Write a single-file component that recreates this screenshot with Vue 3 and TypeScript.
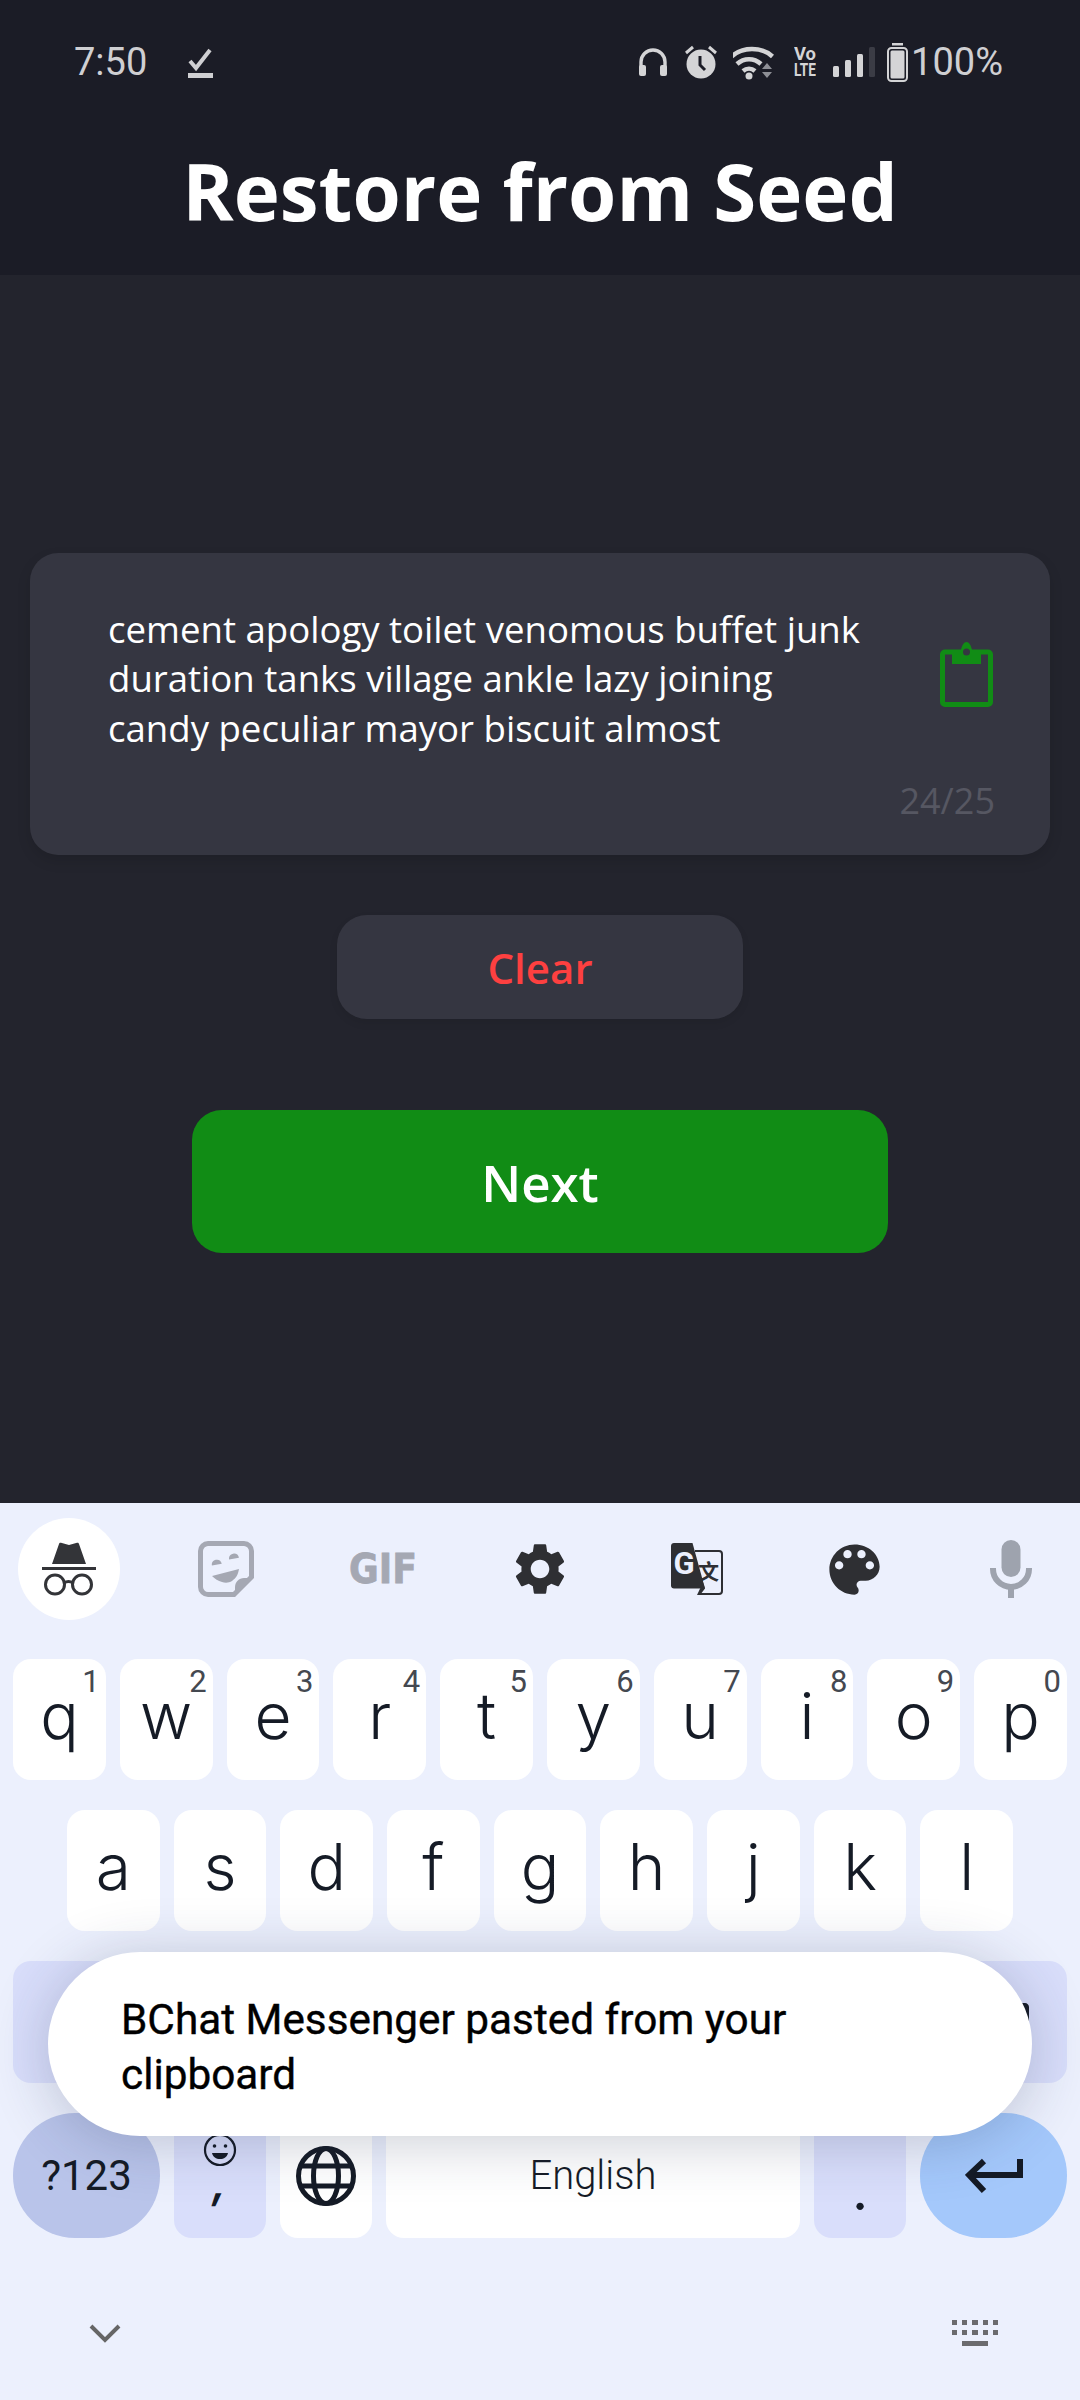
<script setup lang="ts">
interface Key {
  label: string
  hint?: string
}

const seedText =
  'cement apology toilet venomous buffet junk duration tanks village ankle lazy joining candy peculiar mayor biscuit almost'

const hints = ['1', '2', '3', '4', '5', '6', '7', '8', '9', '0']
const topRow: Key[] = 'qwertyuiop'.split('').map((label, i) => ({ label, hint: hints[i] }))
const midRow: Key[] = 'asdfghjkl'.split('').map((label) => ({ label }))
const lowRow: Key[] = 'zxcvbnm'.split('').map((label) => ({ label }))
</script>

<template>
  <div class="screen">
    <header class="top">
      <div class="status">
        <div class="status-left">
          <span class="time">7:50</span>
          <svg class="check" width="26" height="30" viewBox="0 0 26 30">
            <path d="M3 13l6 7L23 2" fill="none" stroke="#cfcfd2" stroke-width="4" />
            <rect x="1" y="25" width="25" height="5" fill="#cfcfd2" />
          </svg>
        </div>
        <div class="status-right">
          <svg class="s-head" width="30" height="30" viewBox="0 0 30 30">
            <path d="M3 24V15a12 12 0 0 1 24 0v9" fill="none" stroke="#d4d4d6" stroke-width="3.4" />
            <rect x="1" y="18" width="7" height="11" rx="2" fill="#d4d4d6" />
            <rect x="22" y="18" width="7" height="11" rx="2" fill="#d4d4d6" />
          </svg>
          <svg class="s-alarm" width="32" height="34" viewBox="0 0 32 34">
            <circle cx="16" cy="19" r="14.500" fill="#d4d4d6" />
            <path d="M15 11v9l5 5" fill="none" stroke="#1b1c26" stroke-width="3" />
            <path d="M1 8l7-6M31 8l-7-6" stroke="#d4d4d6" stroke-width="3" />
          </svg>
          <svg class="s-wifi" width="44" height="35" viewBox="0 0 44 35">
            <path d="M1.500 11.500c11-10 30-10 41 0" transform="translate(-3 0)" fill="none" stroke="#d4d4d6" stroke-width="4.500" />
            <path d="M7 19c7-6.500 17-6.500 24 0" transform="translate(-3 0)" fill="none" stroke="#d4d4d6" stroke-width="4.500" />
            <path d="M13 26c3.500-3 8.500-3 12 0" transform="translate(-3 0)" fill="none" stroke="#d4d4d6" stroke-width="4.500" />
            <circle cx="16" cy="31" r="3.500" fill="#d4d4d6" />
            <path d="M29 24l5-6 5 6zM29 27h10l-5 6z" fill="#8e8f96" />
          </svg>
          <svg class="s-volte" width="22" height="32" viewBox="0 0 22 32">
            <text x="0" y="14" textLength="22" lengthAdjust="spacingAndGlyphs" class="volte-text">Vo</text>
            <text x="0" y="30" textLength="22" lengthAdjust="spacingAndGlyphs" class="volte-text">LTE</text>
          </svg>
          <svg class="s-signal" width="43" height="30" viewBox="0 0 43 30">
            <rect x="0" y="19" width="6" height="11" rx="1.500" fill="#d4d4d6" />
            <rect x="12" y="13" width="6" height="17" rx="1.500" fill="#d4d4d6" />
            <rect x="24" y="7" width="6" height="23" rx="1.500" fill="#d4d4d6" />
            <rect x="36" y="0" width="6" height="30" rx="1.500" fill="#3b3c45" />
          </svg>
          <svg class="s-batt" width="21" height="39" viewBox="0 0 21 39">
            <rect x="5" y="0" width="11" height="2.500" fill="#d4d4d6" />
            <rect x="1" y="5" width="19" height="33" rx="3.500" fill="none" stroke="#d4d4d6" stroke-width="2" />
            <rect x="3.500" y="7.500" width="14" height="28" rx="1.500" fill="#d4d4d6" />
          </svg>
          <span class="pct">100%</span>
        </div>
      </div>
      <h1 class="title">Restore from Seed</h1>
    </header>

    <main class="body">
      <section class="seed-card">
        <div class="seed-row">
          <p class="seed-text">{{ seedText }}</p>
          <svg class="paste" width="53" height="65" viewBox="0 0 53 65">
            <rect x="2.500" y="10" width="48" height="52.500" rx="2.500" fill="none" stroke="#118c15" stroke-width="5" />
            <path d="M12 8h9c1-5 3-8 5.500-8s4.500 3 5.500 8h9v14H12z" fill="#118c15" />
            <circle cx="26.500" cy="10" r="3.500" fill="#353641" />
          </svg>
        </div>
        <div class="counter">24/25</div>
      </section>
      <button class="clear-btn">Clear</button>
      <button class="next-btn">Next</button>
    </main>

    <section class="keyboard">
      <div class="kb-tools">
        <div class="tool tool-active">
          <svg width="56" height="54" viewBox="0 0 56 54">
            <path d="M11 22l7-20c.3-1 1-1.500 2-1.200L28 3l8-2.200c1-.3 1.700.2 2 1.200l7 20z" fill="#333438" />
            <rect x="1" y="25" width="54" height="3" fill="#333438" />
            <circle cx="14" cy="42.500" r="9.500" fill="none" stroke="#333438" stroke-width="3" />
            <circle cx="41" cy="42.500" r="9.500" fill="none" stroke="#333438" stroke-width="3" />
            <path d="M23 41c3-2 6-2 9 0" fill="none" stroke="#333438" stroke-width="3" />
          </svg>
        </div>
        <div class="tool">
          <svg width="56" height="56" viewBox="0 0 56 56">
            <path d="M10 2.500h36c4 0 7.500 3.500 7.500 7.500v26L36 53.500H10c-4 0-7.500-3.500-7.500-7.500V10c0-4 3.500-7.500 7.500-7.500z" fill="none" stroke="#a5a8b3" stroke-width="5" />
            <path d="M55 37L37 55V46c0-5 4-9 9-9z" fill="#a5a8b3" />
            <path d="M13 22c0-3 2-5 5-5s5 2 5 5zM31 19c0-3 2-5 5-5s5 2 5 5z" fill="#a5a8b3" transform="rotate(-10 28 18)" />
            <path d="M14 35l27-7c-1 6-3 9-7 12-3 2-7 2-10 1-4-1-7-3-10-6z" fill="#a5a8b3" />
          </svg>
        </div>
        <div class="tool">
          <svg width="70" height="40" viewBox="0 0 70 40">
            <text x="1" y="34" textLength="68" lengthAdjust="spacingAndGlyphs" class="gif-text">GIF</text>
          </svg>
        </div>
        <div class="tool">
          <svg width="62" height="62" viewBox="0 0 24 24">
            <path fill="#2e2f33" d="M19.140 12.940c.04-.3.06-.61.06-.94 0-.32-.02-.64-.07-.94l2.030-1.580c.18-.14.23-.41.12-.61l-1.920-3.320c-.12-.22-.37-.29-.59-.22l-2.390.96c-.5-.38-1.030-.7-1.620-.94l-.36-2.540c-.04-.24-.24-.41-.48-.41h-3.840c-.24 0-.43.17-.47.41l-.36 2.540c-.59.24-1.130.57-1.620.94l-2.390-.96c-.22-.08-.47 0-.59.22L2.740 8.870c-.12.21-.08.47.12.61l2.030 1.580c-.05.3-.09.63-.09.94s.02.64.07.94l-2.030 1.580c-.18.14-.23.41-.12.61l1.920 3.320c.12.22.37.29.59.22l2.390-.96c.5.38 1.030.7 1.620.94l.36 2.540c.05.24.24.41.48.41h3.840c.24 0 .44-.17.47-.41l.36-2.540c.59-.24 1.130-.56 1.620-.94l2.390.96c.22.08.47 0 .59-.22l1.920-3.320c.12-.22.07-.47-.12-.61l-2.010-1.580zM12 15.600c-1.980 0-3.600-1.620-3.600-3.600s1.620-3.600 3.600-3.600 3.600 1.620 3.600 3.600-1.620 3.600-3.600 3.600z" />
          </svg>
        </div>
        <div class="tool">
          <svg width="52" height="52" viewBox="0 0 52 52">
            <path d="M24 8h24c1.700 0 3 1.300 3 3v37c0 1.700-1.300 3-3 3H29" fill="none" stroke="#2e2f33" stroke-width="2" />
            <path d="M3 0h18.500L34 45.500H3c-1.700 0-3-1.300-3-3V3c0-1.700 1.300-3 3-3z" fill="#2e2f33" />
            <path d="M29 52l5-6.500 -2-6 -6 12.500z" fill="#2e2f33" />
            <text x="2.500" y="31" class="tr-g">G</text>
            <text x="27" y="36" class="tr-zh">文</text>
          </svg>
        </div>
        <div class="tool">
          <svg width="67" height="67" viewBox="0 0 24 24">
            <path fill="#2e2f33" d="M12 3c-4.970 0-9 4.030-9 9s4.030 9 9 9c.83 0 1.500-.67 1.500-1.500 0-.39-.15-.74-.39-1.010-.23-.26-.38-.61-.38-.99 0-.83.67-1.500 1.500-1.500H16c2.760 0 5-2.240 5-5 0-4.420-4.030-8-9-8zm-5.500 9c-.83 0-1.500-.67-1.500-1.500S5.670 9 6.500 9 8 9.670 8 10.500 7.330 12 6.500 12zm3-4C8.670 8 8 7.330 8 6.500S8.670 5 9.500 5s1.500.67 1.500 1.500S10.330 8 9.500 8zm5 0c-.83 0-1.500-.67-1.500-1.500S13.670 5 14.500 5s1.500.67 1.500 1.500S15.330 8 14.500 8zm3 4c-.83 0-1.500-.67-1.500-1.500S16.670 9 17.500 9s1.500.67 1.500 1.500-.67 1.500-1.500 1.500z" />
          </svg>
        </div>
        <div class="tool">
          <svg width="42" height="58" viewBox="0 0 42 58">
            <rect x="11.500" y="0" width="19" height="37" rx="9.500" fill="#9ea3ae" />
            <path d="M3 28v1a18 18 0 0 0 36 0v-1" fill="none" stroke="#9ea3ae" stroke-width="6" />
            <rect x="18" y="46" width="6" height="12" fill="#9ea3ae" />
          </svg>
        </div>
      </div>

      <div class="kb-rows">
        <div class="row">
          <div v-for="k in topRow" :key="k.label" class="key">
            <span class="letter">{{ k.label }}</span>
            <span class="hint">{{ k.hint }}</span>
          </div>
        </div>
        <div class="row row-mid">
          <div v-for="k in midRow" :key="k.label" class="key">
            <span class="letter">{{ k.label }}</span>
          </div>
        </div>
        <div class="row row-low">
          <div class="key key-func key-wide"></div>
          <div v-for="k in lowRow" :key="k.label" class="key">
            <span class="letter">{{ k.label }}</span>
          </div>
          <div class="key key-func key-wide key-back">
            <svg width="54" height="38" viewBox="0 0 54 38">
              <path d="M14 0h36c2 0 4 2 4 4v30c0 2-2 4-4 4H14L0 19z" fill="#151b26" />
            </svg>
          </div>
        </div>
        <div class="row row-bottom">
          <div class="key key-sym key-wide">?123</div>
          <div class="key key-func key-comma">
            <svg class="emoji" width="34" height="34" viewBox="0 0 34 34">
              <circle cx="17" cy="17" r="15" fill="none" stroke="#151b26" stroke-width="2.200" />
              <circle cx="11.500" cy="13" r="1.800" fill="#151b26" />
              <circle cx="22.500" cy="13" r="1.800" fill="#151b26" />
              <path d="M9 20h16c-1 4-4 6-8 6s-7-2-8-6z" fill="#151b26" />
            </svg>
            <span class="comma">,</span>
          </div>
          <div class="key">
            <svg width="60" height="60" viewBox="0 0 60 60" fill="none" stroke="#151b26" stroke-width="5">
              <circle cx="30" cy="30" r="27.500" />
              <ellipse cx="30" cy="30" rx="12.500" ry="27.500" />
              <path d="M4 20h52M4 40h52" />
            </svg>
          </div>
          <div class="key key-space">English</div>
          <div class="key key-func key-period">.</div>
          <div class="key key-enter key-wide">
            <svg width="58" height="36" viewBox="0 0 58 36" fill="none" stroke="#151b26" stroke-width="6">
              <path d="M55 1v16H5" />
              <path d="M19 3L4 17l15 16" />
            </svg>
          </div>
        </div>
      </div>

      <div class="kb-foot">
        <svg width="32" height="20" viewBox="0 0 32 20">
          <path d="M2 3l14 14L30 3" fill="none" stroke="#666" stroke-width="4" />
        </svg>
        <svg width="46" height="26" viewBox="0 0 46 26" fill="#6b6b6e">
          <path d="M0 0h5v5H0zM10 0h5v5h-5zM20 0h6v5h-6zM31 0h5v5h-5zM41 0h5v5h-5zM0 10h5v5H0zM10 10h5v5h-5zM20 10h6v5h-6zM31 10h5v5h-5zM41 10h5v5h-5zM10 21h26v5H10z" />
        </svg>
      </div>

      <div class="toast">BChat Messenger pasted from your clipboard</div>
    </section>
  </div>
</template>

<style>
html,
body {
  margin: 0;
  background: #23242d;
}
</style>

<style scoped>
.screen {
  width: 1080px;
  height: 2400px;
  display: flex;
  flex-direction: column;
  overflow: hidden;
  font-family: "Open Sans", "Noto Sans", sans-serif;
  background: #23242d;
}

.top {
  height: 275px;
  background: #1b1c26;
  box-sizing: border-box;
  flex: none;
}

.status {
  height: 124px;
  display: flex;
  align-items: center;
  justify-content: space-between;
  padding: 0 77px 0 74px;
  color: #cfcfd2;
  font-family: Roboto, sans-serif;
}

.status-left {
  display: flex;
  align-items: center;
  gap: 40px;
}

.time,
.pct {
  font-size: 38px;
  line-height: 40px;
}

.check {
  margin-top: 1px;
}

.status-right {
  display: flex;
  align-items: center;
}

.s-head {
  margin-right: 17px;
}

.s-alarm {
  margin-right: 16px;
}

.s-wifi {
  margin-right: 17px;
}

.s-volte {
  margin-right: 17px;
}

.s-signal {
  margin-right: 11px;
}

.s-batt {
  margin-right: 3px;
}

.volte-text {
  font-family: Roboto, sans-serif;
  font-weight: 700;
  font-size: 19px;
  fill: #d4d4d6;
}

.title {
  margin: 0;
  text-align: center;
  font-size: 78px;
  line-height: 100px;
  font-weight: 700;
  color: #fff;
  padding-top: 17px;
}

.body {
  flex: 1;
  display: flex;
  flex-direction: column;
  align-items: center;
  padding-top: 278px;
}

.seed-card {
  width: 1020px;
  height: 302px;
  box-sizing: border-box;
  padding: 52px 55px 0 78px;
  background: #353641;
  border-radius: 28px;
  box-shadow: 0 6px 14px rgba(0, 0, 0, 0.12);
}

.seed-row {
  display: flex;
  align-items: center;
  justify-content: space-between;
  height: 148px;
}

.seed-text {
  margin: 0;
  width: 762px;
  font-size: 36.6px;
  line-height: 49.5px;
  font-weight: 500;
  color: #fff;
}

.paste {
  margin-top: -10px;
  margin-right: 2px;
}

.counter {
  margin-top: 24px;
  text-align: right;
  font-size: 36px;
  line-height: 48px;
  color: #565762;
}

.clear-btn,
.next-btn {
  border: 0;
  padding: 0;
  font-family: inherit;
  text-align: center;
}

.clear-btn {
  width: 406px;
  height: 104px;
  margin-top: 60px;
  border-radius: 30px;
  background: #353641;
  color: #fd4040;
  font-size: 42px;
  font-weight: 600;
  box-shadow: 0 4px 8px rgba(0, 0, 0, 0.08);
}

.next-btn {
  width: 696px;
  height: 143px;
  margin-top: 91px;
  border-radius: 30px;
  background: #118c15;
  color: #fff;
  font-size: 51px;
  font-weight: 600;
}

.keyboard {
  position: relative;
  flex: none;
  height: 897px;
  background: #ecf0fd;
  color: #151b26;
  font-family: Inter, Roboto, sans-serif;
}

.kb-tools {
  height: 156px;
  box-sizing: border-box;
  padding: 15px 18px 0;
  display: flex;
  justify-content: space-between;
}

.tool {
  width: 102px;
  height: 102px;
  display: flex;
  align-items: center;
  justify-content: center;
}

.tool-active {
  background: #fff;
  border-radius: 50%;
}

.gif-text {
  font-family: "DejaVu Sans", sans-serif;
  font-weight: 700;
  font-size: 40px;
  fill: #a5a8b3;
  stroke: #a5a8b3;
  stroke-width: 0.8;
}

.tr-g {
  font-family: Roboto, sans-serif;
  font-weight: 700;
  font-size: 31px;
  fill: #ecf0fd;
}

.tr-zh {
  font-family: "Noto Sans CJK SC", sans-serif;
  font-weight: 700;
  font-size: 21px;
  fill: #2e2f33;
}

.kb-rows {
  display: flex;
  flex-direction: column;
  gap: 30px;
}

.row {
  display: flex;
  gap: 14px;
  padding: 0 13px;
  height: 121px;
}

.row-mid {
  padding: 0 67px;
}

.row-low {
  height: 122px;
}

.row-bottom {
  height: 125px;
}

.key {
  position: relative;
  flex: 1 1 0;
  display: flex;
  align-items: center;
  justify-content: center;
  background: #fff;
  border-radius: 18px;
}

.letter {
  font-size: 64px;
  line-height: 1;
  font-weight: 350;
  margin-bottom: 8px;
}

.hint {
  position: absolute;
  top: 8px;
  right: 6px;
  font-size: 31px;
  line-height: 30px;
  color: #444850;
  font-family: Roboto, sans-serif;
}

.key-func {
  background: #d9defb;
}

.key-wide {
  flex: 0 0 147px;
  border-radius: 62px;
}

.row-low .key-wide {
  border-radius: 18px;
}

.key-back {
  justify-content: flex-end;
  padding-right: 38px;
  box-sizing: border-box;
}

.key-sym {
  background: #b9c4ea;
  font-size: 42px;
  font-family: Roboto, sans-serif;
}

.key-comma {
  flex-direction: column;
  justify-content: flex-start;
}

.emoji {
  margin-top: 20px;
}

.comma {
  font-size: 44px;
  line-height: 30px;
  font-weight: 600;
  transform: skewX(-10deg);
}

.key-space {
  flex: 0 0 414px;
  font-size: 40px;
  font-weight: 300;
  font-family: Roboto, sans-serif;
}

.key-period {
  font-size: 56px;
  line-height: 70px;
  align-items: flex-start;
  padding-top: 42px;
  box-sizing: border-box;
}

.key-enter {
  background: #a4c8fb;
}

.kb-foot {
  display: flex;
  justify-content: space-between;
  align-items: center;
  padding: 82px 82px 0 89px;
}

.toast {
  position: absolute;
  left: 48px;
  top: 449px;
  width: 984px;
  height: 184px;
  box-sizing: border-box;
  padding: 40px 180px 0 73px;
  background: #fff;
  border-radius: 92px;
  font-family: Roboto, sans-serif;
  font-weight: 400;
  -webkit-text-stroke: 0.4px #000;
  font-size: 42.3px;
  line-height: 55px;
  color: #000;
  box-shadow: 0 6px 60px rgba(35, 45, 80, 0.24);
}
</style>
